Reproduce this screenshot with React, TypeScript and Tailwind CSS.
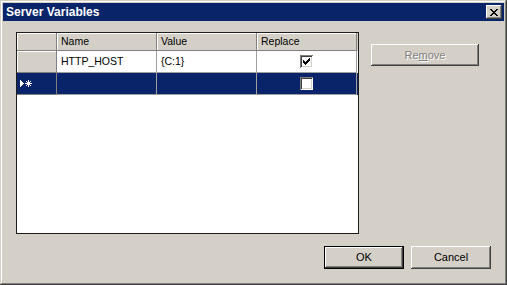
import React from "react";

const raised =
  "shadow-[inset_-1px_-1px_#404040,inset_1px_1px_#ffffff,inset_-2px_-2px_#808080,inset_2px_2px_#d4d0c8]";

function CheckBox({ checked }: { checked: boolean }) {
  return (
    <div className="w-[13px] h-[13px] bg-white shadow-[inset_1px_1px_#808080,inset_-1px_-1px_#ffffff,inset_2px_2px_#404040,inset_-2px_-2px_#d4d0c8] flex items-center justify-center">
      {checked && (
        <svg width="7" height="7" viewBox="0 0 7 7" shapeRendering="crispEdges">
          <rect x="0" y="2" width="1" height="3" fill="#000" />
          <rect x="1" y="3" width="1" height="3" fill="#000" />
          <rect x="2" y="4" width="1" height="3" fill="#000" />
          <rect x="3" y="3" width="1" height="3" fill="#000" />
          <rect x="4" y="2" width="1" height="3" fill="#000" />
          <rect x="5" y="1" width="1" height="3" fill="#000" />
          <rect x="6" y="0" width="1" height="3" fill="#000" />
        </svg>
      )}
    </div>
  );
}

export default function App() {
  return (
    <div
      className="w-[507px] h-[285px] bg-[#d4d0c8] p-[3px] flex flex-col shadow-[inset_-1px_-1px_#404040,inset_1px_1px_#d4d0c8,inset_-2px_-2px_#808080,inset_2px_2px_#ffffff] text-black"
      style={{ fontFamily: '"Liberation Sans", Arial, sans-serif' }}
    >
      {/* Title bar */}
      <div className="h-[18px] bg-[#0a246a] flex items-center justify-between pl-[3px] pr-[2px]">
        <span className="text-white font-bold text-[12px] leading-none">Server Variables</span>
        <div className={`w-[16px] h-[14px] bg-[#d4d0c8] flex items-center justify-center ${raised}`}>
          <svg width="8" height="7" viewBox="0 0 8 7" shapeRendering="crispEdges">
            <path d="M0 0h2v1h1v1h2v-1h1v-1h2v1h-1v1h-1v1h-1v1h1v1h1v1h1v1h-2v-1h-1v-1h-2v1h-1v1h-2v-1h1v-1h1v-1h1v-1h-1v-1h-1v-1h-1z" fill="#000" />
          </svg>
        </div>
      </div>

      {/* Body */}
      <div className="flex items-start">
        {/* Grid */}
        <div className="ml-[13px] mt-[11px] w-[343px] h-[202px] border border-[#1c1c1c] bg-white flex flex-col text-[10.5px]">
          {/* Header row */}
          <div className="flex h-[18px] bg-[#d4d0c8]">
            <div className="w-[40px] shrink-0 border-r border-b border-[#808080] shadow-[inset_1px_1px_#ffffff]" />
            {["Name", "Value", "Replace"].map((h) => (
              <div
                key={h}
                className="w-[100px] shrink-0 border-r border-b border-[#808080] shadow-[inset_1px_1px_#ffffff] pl-[4px] flex items-center"
              >
                {h}
              </div>
            ))}
          </div>
          {/* Row 1 */}
          <div className="flex h-[22px]">
            <div className="w-[40px] shrink-0 bg-[#d4d0c8] border-r border-b border-[#808080] shadow-[inset_1px_1px_#ffffff]" />
            <div className="w-[100px] shrink-0 border-r border-b border-[#a0a0a0] pl-[4px] flex items-center">HTTP_HOST</div>
            <div className="w-[100px] shrink-0 border-r border-b border-[#a0a0a0] pl-[4px] flex items-center">{"{C:1}"}</div>
            <div className="w-[100px] shrink-0 border-r border-b border-[#a0a0a0] flex items-center justify-center">
              <CheckBox checked />
            </div>
          </div>
          {/* Row 2 (selected, new row) */}
          <div className="flex h-[22px] bg-[#0a246a]">
            <div className="w-[40px] shrink-0 border-r border-b border-[#808080] flex items-center pl-[3px] gap-[1px]">
              <svg width="4" height="7" viewBox="0 0 4 7" shapeRendering="crispEdges">
                <path d="M0 0h1v1h1v1h1v1h1v1h-1v1h-1v1h-1v1h-1z" fill="#fff" />
              </svg>
              <svg width="7" height="7" viewBox="0 0 7 7" shapeRendering="crispEdges">
                <rect x="3" y="0" width="1" height="7" fill="#fff" />
                <rect x="0" y="3" width="7" height="1" fill="#fff" />
                <rect x="1" y="1" width="1" height="1" fill="#fff" />
                <rect x="5" y="1" width="1" height="1" fill="#fff" />
                <rect x="1" y="5" width="1" height="1" fill="#fff" />
                <rect x="5" y="5" width="1" height="1" fill="#fff" />
                <rect x="2" y="2" width="3" height="3" fill="#fff" />
              </svg>
            </div>
            <div className="w-[100px] shrink-0 border-r border-b border-[#a0a0a0]" />
            <div className="w-[100px] shrink-0 border-r border-b border-[#a0a0a0]" />
            <div className="w-[100px] shrink-0 border-r border-b border-[#a0a0a0] flex items-center justify-center">
              <CheckBox checked={false} />
            </div>
          </div>
        </div>

        {/* Remove button */}
        <div
          className={`ml-[12px] mt-[23px] w-[108px] h-[22px] bg-[#d4d0c8] flex items-center justify-center text-[11px] text-[#808080] ${raised}`}
          style={{ textShadow: "1px 1px 0 #ffffff" }}
        >
          <span>
            Re<span className="underline">m</span>ove
          </span>
        </div>
      </div>

      {/* Bottom buttons */}
      <div className="flex justify-end gap-[7px] mt-[12px] pr-[13px]">
        <div className="w-[80px] h-[23px] border border-black bg-[#d4d0c8]">
          <div className={`w-full h-full flex items-center justify-center text-[11px] ${raised}`}>OK</div>
        </div>
        <div className={`w-[80px] h-[23px] bg-[#d4d0c8] flex items-center justify-center text-[11px] ${raised}`}>
          Cancel
        </div>
      </div>
    </div>
  );
}
